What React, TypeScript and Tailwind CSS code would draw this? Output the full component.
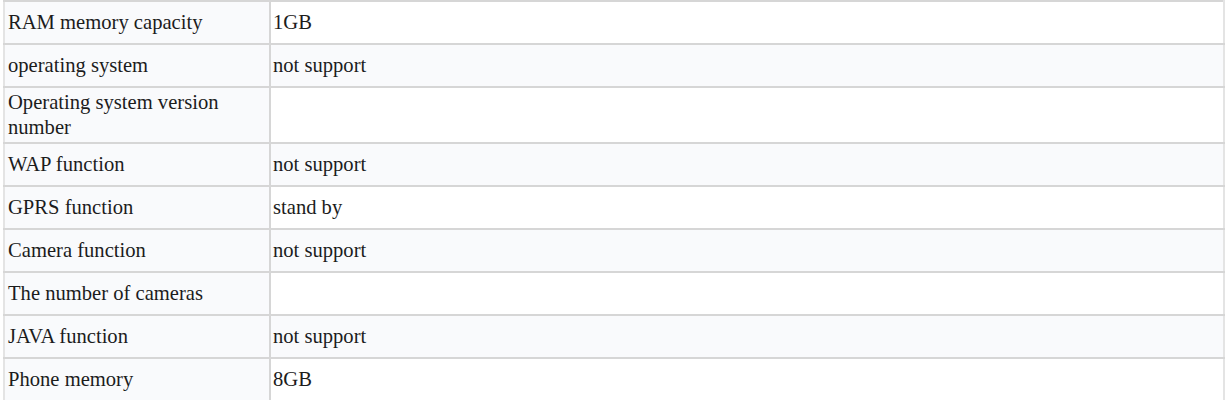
const rows: [string, string][] = [
  ['RAM memory capacity', '1GB'],
  ['operating system', 'not support'],
  ['Operating system version number', ''],
  ['WAP function', 'not support'],
  ['GPRS function', 'stand by'],
  ['Camera function', 'not support'],
  ['The number of cameras', ''],
  ['JAVA function', 'not support'],
  ['Phone memory', '8GB'],
];

export default function App() {
  return (
    <div className="w-[1230px] h-[400px] overflow-hidden bg-white pl-[3px] pr-[5px] font-['Liberation_Serif','Times_New_Roman',serif]">
      <table className="w-full border-collapse text-[20.6px] leading-[25px] text-[#1c1c1c]">
        <tbody>
          {rows.map(([label, value], i) => (
            <tr key={label} className={i % 2 === 1 ? 'bg-[#f9fafc]' : 'bg-white'}>
              <td className="w-[266px] h-[43px] border-2 border-[#d6d6d6] border-l-[#e4e4e4] px-[3px] py-[2px] align-middle bg-[#f9fafc]">
                <div className="w-[232px]">{label}</div>
              </td>
              <td className="h-[43px] border-2 border-[#d6d6d6] border-r-[#e4e4e4] px-[2px] py-[2px] align-middle">
                {value}
              </td>
            </tr>
          ))}
        </tbody>
      </table>
    </div>
  );
}
